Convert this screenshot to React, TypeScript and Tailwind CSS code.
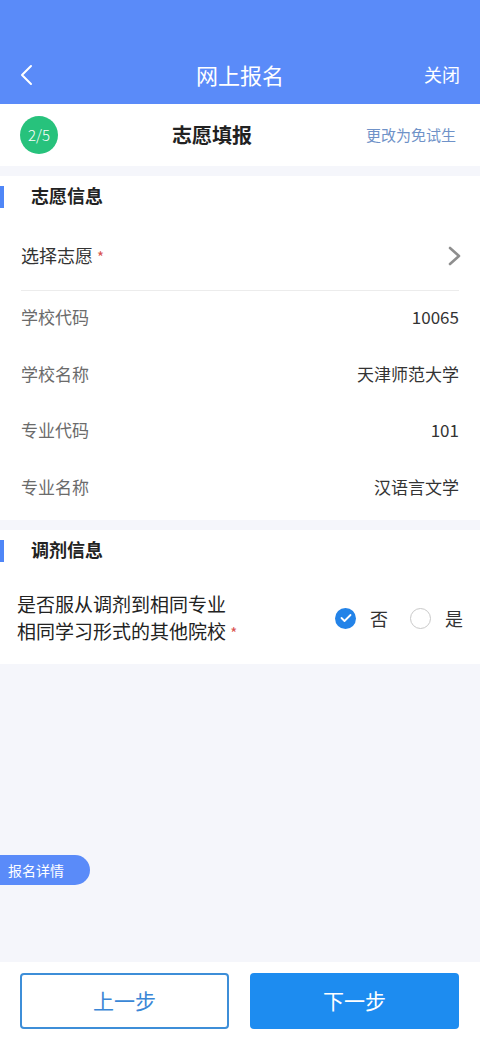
const font = { fontFamily: '"Noto Sans CJK SC", "Noto Sans", sans-serif' };

function Row({ label, value }: { label: string; value: string }) {
  return (
    <div className="flex h-[56.5px] items-center justify-between px-[21px] pb-[5px]">
      <span className="text-[17px] text-[#6b6b6b]">{label}</span>
      <span className="text-[17px] text-[#333]">{value}</span>
    </div>
  );
}

function SectionTitle({ title }: { title: string }) {
  return (
    <div className="flex h-[42px] items-center">
      <div className="h-[22px] w-[4px] bg-[#4f86f7]" />
      <span className="ml-[27px] pb-[3px] text-[18px] font-bold text-[#222]">{title}</span>
    </div>
  );
}

export default function App() {
  return (
    <div className="flex h-[1040px] w-[480px] flex-col bg-[#f5f6fb]" style={font}>
      {/* header */}
      <div className="flex h-[104px] flex-col justify-end bg-[#5a8bf9]">
        <div className="relative flex h-[54px] items-center justify-between px-4 pb-[5px]">
          <svg width="20" height="24" viewBox="0 0 20 24" className="ml-[2px]">
            <path d="M13 3 L4 12 L13 21" fill="none" stroke="white" strokeWidth="2" strokeLinecap="round" strokeLinejoin="round" />
          </svg>
          <span className="absolute left-1/2 -translate-x-1/2 text-[22px] text-white">网上报名</span>
          <span className="mr-[4px] text-[18px] text-white">关闭</span>
        </div>
      </div>

      {/* step */}
      <div className="relative flex h-[62px] items-center bg-white px-5">
        <div className="flex h-[38px] w-[38px] items-center justify-center rounded-full bg-[#27c27c] text-[15px] font-light text-white">
          2/5
        </div>
        <span className="absolute left-[172px] text-[20px] font-bold text-[#222]">志愿填报</span>
        <span className="ml-auto mr-[4px] text-[15px] text-[#6f92c8]">更改为免试生</span>
      </div>

      {/* 志愿信息 */}
      <div className="mt-[10px] bg-white pb-[3px]">
        <SectionTitle title="志愿信息" />
        <div className="mx-[21px] flex h-[73px] items-center justify-between border-b border-[#ececec] pt-[3px]">
          <span className="text-[18px] text-[#333]">
            选择志愿 <span className="text-[15px] text-[#d9534f]">*</span>
          </span>
          <svg width="16" height="24" viewBox="0 0 16 24" className="-mr-[4px]">
            <path d="M3 4 L12 12 L3 20" fill="none" stroke="#8e8e8e" strokeWidth="2.6" strokeLinecap="round" strokeLinejoin="round" />
          </svg>
        </div>
        <Row label="学校代码" value="10065" />
        <Row label="学校名称" value="天津师范大学" />
        <Row label="专业代码" value="101" />
        <Row label="专业名称" value="汉语言文学" />
      </div>

      {/* 调剂信息 */}
      <div className="mt-[10px] bg-white">
        <SectionTitle title="调剂信息" />
        <div className="flex h-[92px] items-center justify-between pl-[17px] pr-[17px]">
          <div className="text-[19px] leading-[27px] text-[#222]">
            <div>是否服从调剂到相同专业</div>
            <div>
              相同学习形式的其他院校 <span className="text-[15px] text-[#d9534f]">*</span>
            </div>
          </div>
          <div className="flex items-center">
            <div className="flex h-[21px] w-[21px] items-center justify-center rounded-full bg-[#2383e8]">
              <svg width="12" height="10" viewBox="0 0 12 10">
                <path d="M1.5 5 L4.5 8 L10.5 2" fill="none" stroke="white" strokeWidth="1.8" strokeLinecap="round" strokeLinejoin="round" />
              </svg>
            </div>
            <span className="ml-[14px] text-[18px] text-[#333]">否</span>
            <div className="ml-[22px] h-[21px] w-[21px] rounded-full border-[1.5px] border-[#c9c9c9]" />
            <span className="ml-[14px] text-[18px] text-[#333]">是</span>
          </div>
        </div>
      </div>

      {/* fill */}
      <div className="flex-1">
        <div className="mt-[191px] flex h-[30px] w-[90px] items-center rounded-r-full bg-[#5a8bf9] pl-[8px] text-[14px] text-white">
          报名详情
        </div>
      </div>

      {/* bottom */}
      <div className="grid h-[78px] grid-cols-2 items-center gap-[21px] bg-white pl-[20px] pr-[21px]">
        <button className="flex h-[56px] items-center justify-center rounded-[4px] border-2 border-[#3d8ed8] bg-white text-[21px] text-[#3a86d6]">
          上一步
        </button>
        <button className="flex h-[56px] items-center justify-center rounded-[4px] bg-[#1d8cf0] text-[21px] text-white">
          下一步
        </button>
      </div>
    </div>
  );
}
